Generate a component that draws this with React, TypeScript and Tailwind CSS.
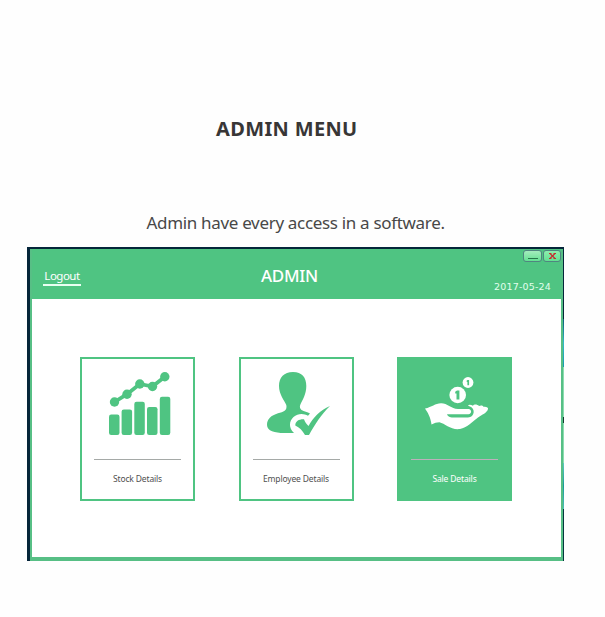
import type { ReactNode } from "react";

function StockIcon() {
  return (
    <svg viewBox="0 0 62 64" width="62" height="64" fill="#4fc482">
      <rect x="0" y="42.5" width="10.5" height="20.5" rx="2.2" />
      <rect x="12.6" y="37.5" width="10.5" height="25.5" rx="2.2" />
      <rect x="25.3" y="29.8" width="10.5" height="33.2" rx="2.2" />
      <rect x="38" y="35" width="10.5" height="28" rx="2.2" />
      <rect x="50.8" y="24.8" width="10.5" height="38.2" rx="2.2" />
      <path d="M5.5 30 18 22.2 30.8 12 43.5 14.5 55.8 4.7" fill="none" stroke="#4fc482" strokeWidth="3.8" />
      <circle cx="5.5" cy="30" r="4.7" />
      <circle cx="18" cy="22.2" r="4.7" />
      <circle cx="30.8" cy="12" r="4.7" />
      <circle cx="43.5" cy="14.5" r="4.7" />
      <circle cx="55.8" cy="4.7" r="4.7" />
    </svg>
  );
}

function EmployeeIcon() {
  return (
    <svg viewBox="0 0 64 64" width="64" height="64" fill="#4fc482">
      <path d="M26 0C17 0 12 5.5 12 14C12 22 17 28 19.3 33C20.5 38.5 16.5 39.8 11 41.3C4 43.5 0 47 0 53C0 59 8 61 17 61H27C21.5 56 22 49 26.5 45C31 41 37 41.3 41 43.8L43 41.5C40.5 40 37 39.7 34.5 38C32.8 36.5 32.6 34.5 33.2 33C35.5 28 39.3 22 39.3 14C39.3 5.5 35 0 26 0Z" />
      <path d="M28.3 53.5C28.2 49 32.5 47 37 47.3C38 50 39.5 52.3 41.5 54C46 46 53 38 63 34C54 42.5 48 52.5 42 63H38C35.5 58.5 32.5 55.5 28.3 53.5Z" />
    </svg>
  );
}

function SaleIcon() {
  return (
    <svg viewBox="0 0 64 54" width="64" height="54" fill="#fff">
      <path d="M0 31.5C7 30 10 26.4 16 26.2C22 26 26 31.5 33 32H43.5C47 32.5 47 36.8 43.5 37.3H22C23 40 26 40.6 29 40.6H43C50 40 50.5 31.5 45 29.5L43 28.8C44 27.2 46 28 48 28.7C49.5 26.8 52.5 27.7 54 29C56 28 57.8 28.5 58.5 29.8C61 29.3 63.5 30.3 63 32C62 36 57 37.5 53 40.5C47 45 42 50.8 35 52C26 53.3 20 46.5 14.5 45.2C11 45.3 10 46 6.5 47.5C5.5 40 3 36 0 31.5Z" />
      <circle cx="32.7" cy="18" r="8.3" />
      <circle cx="43" cy="5.5" r="5.4" />
      <path d="M30.2 14.8L32 13.5H34.4V22.5H31.5V16.5H30.2Z" fill="#4fc482" />
      <path d="M41.7 3.6L42.5 3H44.1V8.2H42.4V5H41.7Z" fill="#4fc482" />
    </svg>
  );
}

function Card({ label, active = false, children }: { label: string; active?: boolean; children: ReactNode }) {
  return (
    <div className={`flex h-36 w-[115px] flex-col items-center border-2 border-[#4fc482] ${active ? "bg-[#4fc482] text-white" : "bg-white text-[#505050]"}`}>
      <div className="flex h-[100px] w-full shrink-0 justify-center pt-[13px] pl-[5px]">{children}</div>
      <div className={`h-px w-[87px] shrink-0 ${active ? "bg-[#bdb0bb]" : "bg-[#a5a9a7]"}`} />
      <div className="mt-[13px] text-[8.5px] leading-[12px] tracking-[-0.15px] whitespace-nowrap">{label}</div>
    </div>
  );
}

export default function App() {
  return (
    <main className="flex h-[617px] w-[605px] flex-col overflow-hidden bg-[#fefefe] font-['Noto_Sans',sans-serif]">
      <h1 className="mt-[115px] ml-[216px] text-[20px] leading-7 font-bold tracking-[0.35px] whitespace-nowrap text-[#383636]">ADMIN MENU</h1>
      <p className="mt-[66px] ml-[146.5px] h-[38px] text-[17px] leading-7 tracking-[-0.32px] whitespace-nowrap text-[#484848]">Admin have every access in a software.</p>
      <section className="ml-[27px] flex h-[314px] w-[537px] border-t-2 border-l-[3px] border-[#05263a]">
        <div className="flex min-w-0 flex-1 flex-col border-x-2 border-b-4 border-[#57bf85] bg-white">
          <header className="flex h-[50px] shrink-0 bg-[#4fc482] text-white">
            <div className="mt-[18px] ml-[11px] h-[19px] w-[38px] border-b-2 border-[#e9fff2] text-center text-[11.5px] leading-[17px] tracking-[-0.5px]">Logout</div>
            <div className="mt-[15px] ml-[180px] w-[60px] text-[17px] leading-6 font-medium tracking-[-0.3px] whitespace-nowrap">ADMIN</div>
            <div className="ml-auto flex flex-col items-end">
              <div className="mt-px flex h-[14px] gap-px">
                <button className="flex h-3 w-[19px] items-end justify-center rounded-[3px] border border-[#508580] bg-linear-to-b from-[#a3edbd] to-[#62e092] pb-[2px]"><span className="h-px w-2.5 bg-[#27784b]" /></button>
                <button className="flex h-3 w-[18px] items-center justify-center rounded-[3px] border border-[#508580] bg-linear-to-b from-[#8cefad] to-[#62e092]">
                  <svg width="7" height="6" viewBox="0 0 7 6"><path d="M1 .5 6 5.5M6 .5 1 5.5M0 .5H2.5M4.5.5H7M0 5.5H2.5M4.5 5.5H7" stroke="#c42f30" strokeWidth="1.2" /></svg>
                </button>
              </div>
              <time className="mt-[16px] mr-[10px] font-['DejaVu_Sans',sans-serif] text-[9.5px] leading-[14px] tracking-[0.18px] whitespace-nowrap text-[#e2ffed]">2017-05-24</time>
            </div>
          </header>
          <div className="mt-[58px] ml-12 flex gap-[43.5px]">
            <Card label="Stock Details"><StockIcon /></Card>
            <Card label="Employee Details"><EmployeeIcon /></Card>
            <Card label="Sale Details" active><div className="pt-[5px]"><SaleIcon /></div></Card>
          </div>
        </div>
        <div className="flex w-px flex-col">
          <div className="h-[70px] bg-[#05263a]" />
          <div className="h-[48px] bg-linear-to-b from-[#0a5c78] via-[#35b9c9] to-[#159ab0]" />
          <div className="h-[50px] bg-[#8cdcb0]" />
          <div className="h-[6px] bg-[#12382f]" />
          <div className="h-[40px] bg-[#8cdcb0]" />
          <div className="h-[46px] bg-linear-to-b from-[#5cc8c0] via-[#159a9a] to-[#4dbdb8]" />
          <div className="flex-1 bg-[#05363f]" />
        </div>
      </section>
    </main>
  );
}
